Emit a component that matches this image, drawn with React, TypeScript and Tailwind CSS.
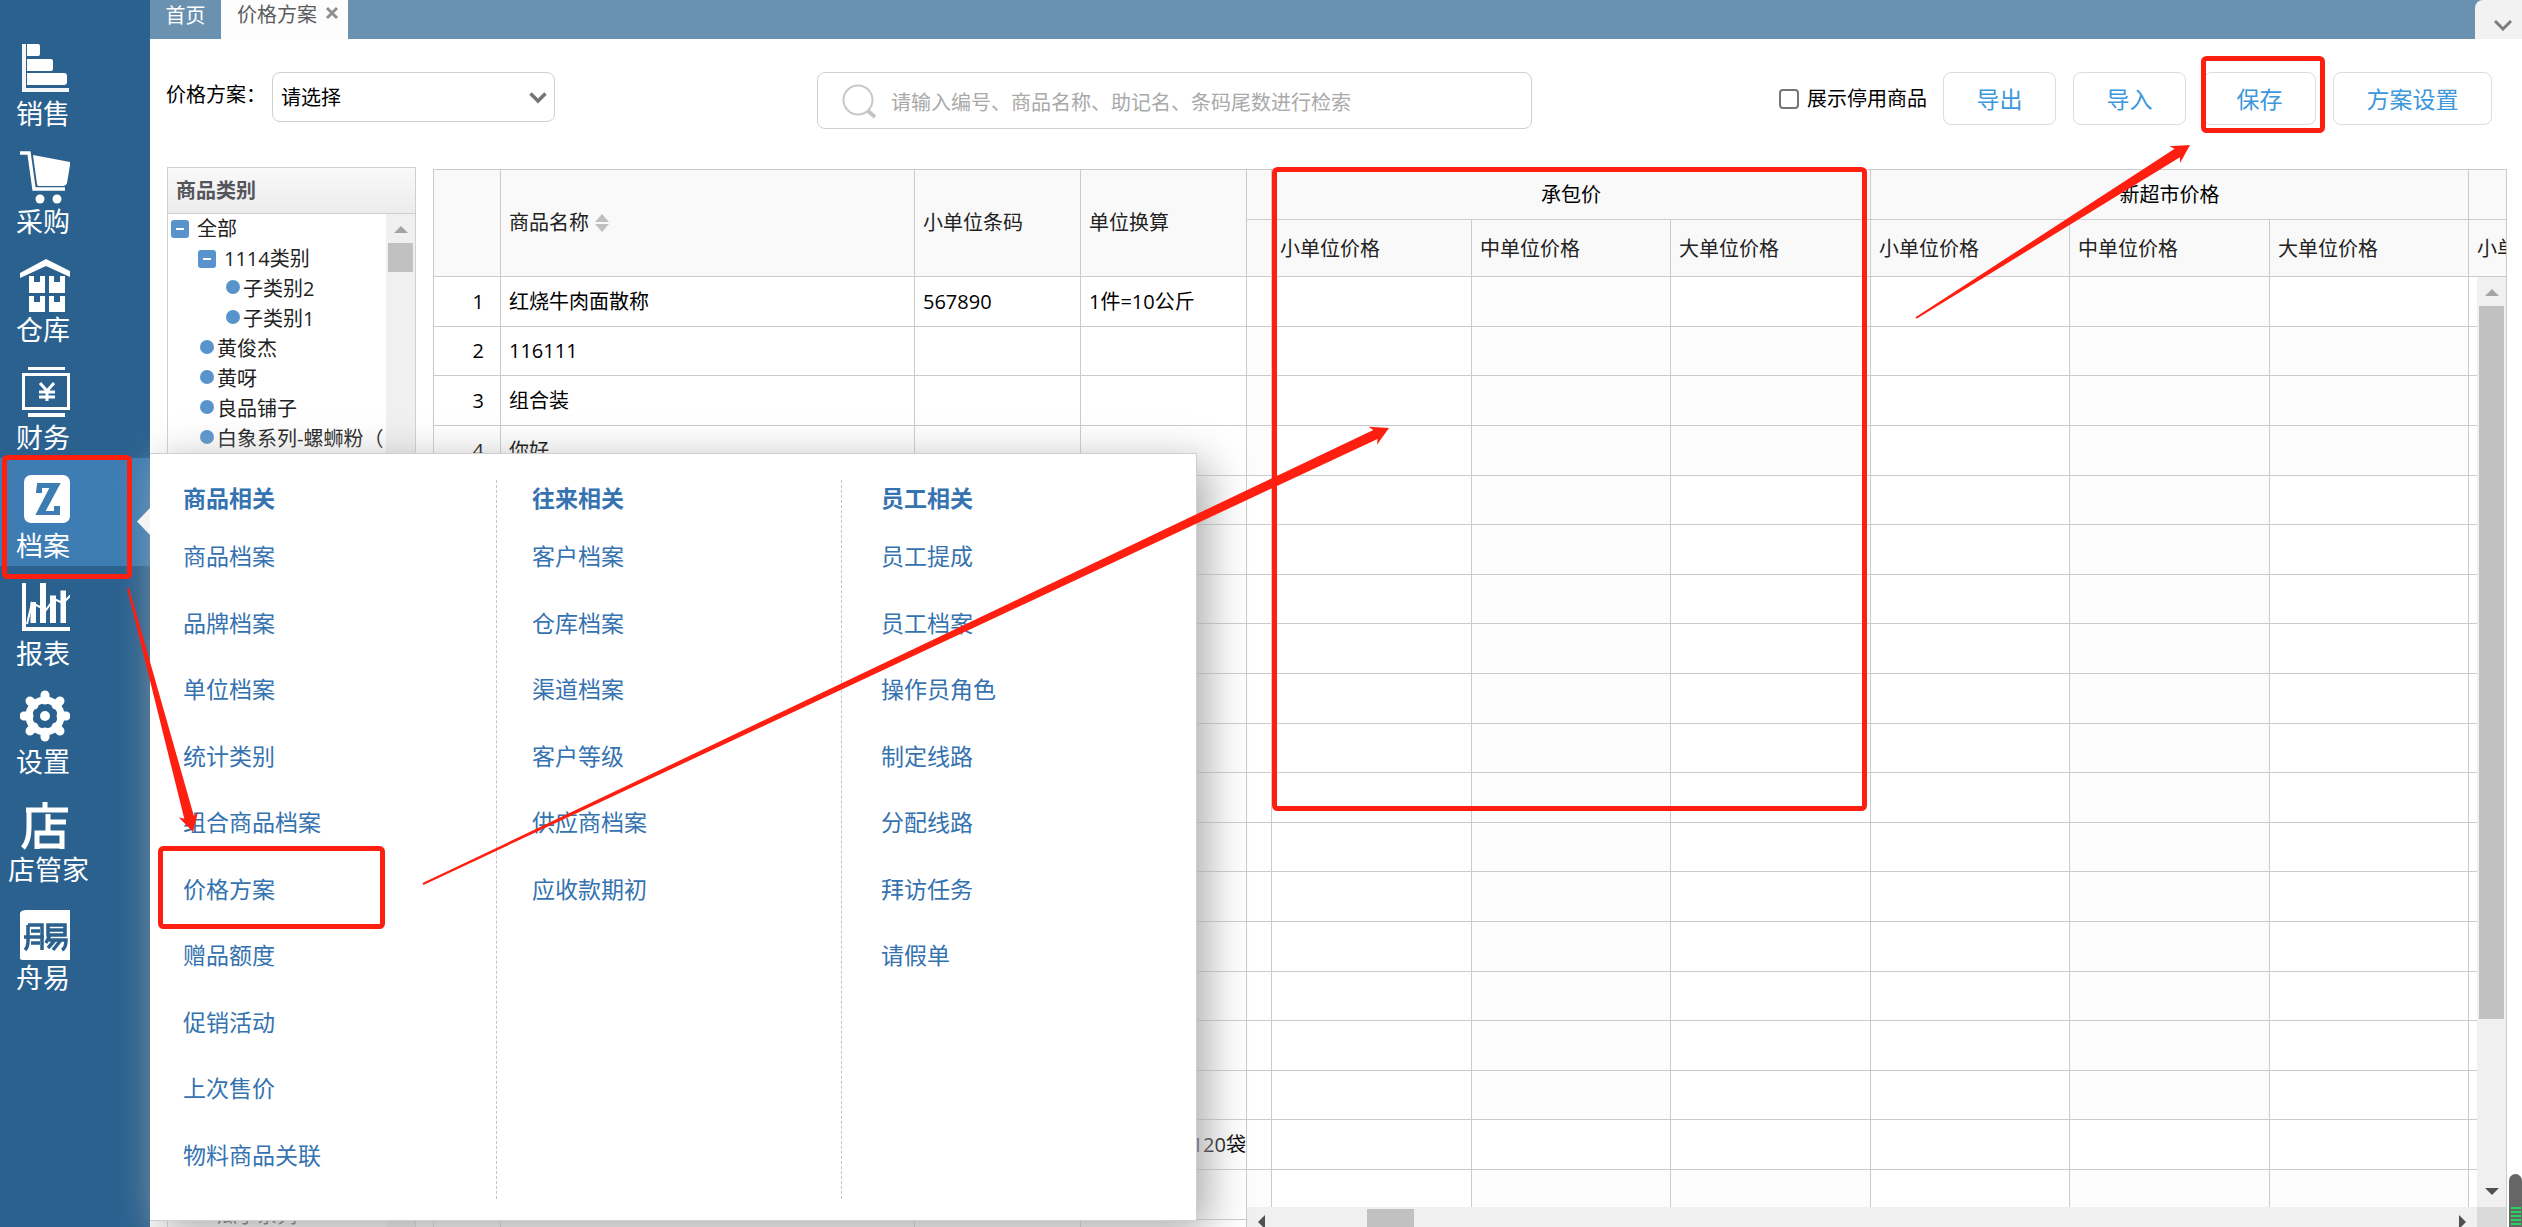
import type { ReactNode } from "react";

const RED = "#ff1f10";

type NavItem = { label: string; icon: ReactNode; active?: boolean; wide?: boolean };

const nav: NavItem[] = [
  {
    label: "销售",
    icon: (
      <>
        <path d="M2 2h4v44h43v4H2z" opacity=".95" />
        <path d="M7 2h11q2 0 2 2v8q0 2-2 2H7zM7 17h24q2 0 2 2v8q0 2-2 2H7zM7 31h37q3 0 3 3v6q0 3-3 3H7z" />
      </>
    ),
  },
  {
    label: "采购",
    icon: (
      <>
        <path d="M13 5l37 7v3l-3 18q-1 3-4 3H19q-2 0-2-2z" />
        <path d="M-1 3h10l5 36h31" fill="none" stroke="#fff" strokeWidth="3.500" />
        <circle cx="20" cy="49" r="4.500" />
        <circle cx="37" cy="49" r="4.500" />
      </>
    ),
  },
  {
    label: "仓库",
    icon: (
      <>
        <path d="M0 20V15L26 1l24 12v6L26 8z" />
        <path d="M9 18h5v6h6v-6h5v17H9zM29 18h5v6h6v-6h5v17H29zM9 38h5v6h6v-6h5v16H9zM29 38h5v6h6v-6h5v16H29z" />
      </>
    ),
  },
  {
    label: "财务",
    icon: (
      <>
        <path d="M8 1h37v3H8zM8 47h37v4H8z" />
        <path d="M3.500 8.500h45v34h-45z" fill="none" stroke="#fff" strokeWidth="3" />
        <path d="M20 17l7 8 7-8M27 25v10M19 26h16M19 31h16" fill="none" stroke="#fff" strokeWidth="3" />
      </>
    ),
  },
  {
    label: "档案",
    active: true,
    icon: (
      <>
        <rect x="4" y="1" width="46" height="48" rx="7" />
        <path d="M18 10h21L24 38h11v-5h4v7H17L31 13H21v5h-4z" fill="#3d7db3" stroke="#3d7db3" strokeWidth="2" />
      </>
    ),
  },
  {
    label: "报表",
    icon: (
      <>
        <path d="M2 1h4v44h44v4H2z" />
        <path d="M10.500 20h5.500v21h-5.500zM20 1h6v40h-6zM30 13.500h6V41h-6zM40.500 8.500H46V41h-5.500z" />
        <path d="M7 42l5-21 14 7 8-11 9 4 8-8" fill="none" stroke="#fff" strokeWidth="2" />
      </>
    ),
  },
  {
    label: "设置",
    icon: (
      <>
        <circle cx="25" cy="26" r="16" fill="none" stroke="#fff" strokeWidth="7" />
        <circle cx="25" cy="26" r="5" />
        <path
          d="M25 5v5M25 42v5M4 26h5M41 26h5M10 11l4 4M36 37l4 4M40 11l-4 4M14 37l-4 4"
          stroke="#fff"
          strokeWidth="9"
          strokeLinecap="round"
        />
      </>
    ),
  },
  {
    label: "店管家",
    wide: true,
    icon: (
      <path
        d="M25 4v7M6 12h42M9 12v18q0 13-6 20M28 16v18M28 24h18M17 35h25v13H17zM17 35v16M42 35v16"
        fill="none"
        stroke="#fff"
        strokeWidth="5"
      />
    ),
  },
  {
    label: "舟易",
    icon: (
      <>
        <path d="M50 4v50H3q-4 0-4-4V11q0-7 7-7z" />
        <path
          d="M8 19h14v25M8 19v16q0 6-3 9M11 25h9M4 31h20M11 37h9M28 19h17v10H28zM28 24h17M30 29l-4 8M29 34h17q0 8-4 10M35 34l-7 8M41 34l-8 10"
          fill="none"
          stroke="#2a618f"
          strokeWidth="3.500"
        />
      </>
    ),
  },
];

const menu = [
  {
    title: "商品相关",
    column: "w-[347px] pl-[33px]",
    items: [
      "商品档案", "品牌档案", "单位档案", "统计类别", "组合商品档案",
      "价格方案", "赠品额度", "促销活动", "上次售价", "物料商品关联",
    ],
  },
  {
    title: "往来相关",
    column: "w-[345px] pl-[35px]",
    items: ["客户档案", "仓库档案", "渠道档案", "客户等级", "供应商档案", "应收款期初"],
  },
  {
    title: "员工相关",
    column: "flex-1 pl-[39px]",
    items: ["员工提成", "员工档案", "操作员角色", "制定线路", "分配线路", "拜访任务", "请假单"],
  },
];

type Product = { name?: string; code?: string; unit?: string; mid?: boolean; big?: boolean };

const products: Product[] = Array.from({ length: 20 }, (): Product => ({ big: true }));
products[0] = { name: "红烧牛肉面散称", code: "567890", unit: "1件=10公斤", big: true };
products[1] = { name: "116111" };
products[2] = { name: "组合装" };
products[3] = { name: "你好" };
products[17] = { unit: "120袋", mid: true, big: true };
products[18] = {};

const rowHeight = (i: number) => (i % 5 === 1 || i % 5 === 4 ? "h-[49px]" : "h-[50px]");

function MenuPanel() {
  return (
    <div className="absolute left-full top-[453px] z-20 flex h-[768px] w-[1047px] border border-l-0 border-[#cfcfcf] bg-white pb-[21px] pt-[26px] shadow-[10px_10px_40px_#aaa]">
      {menu.map((group) => (
        <section
          key={group.title}
          className={`flex flex-col border-r border-dashed border-[#c4c4c4] text-[23px] text-[#3572b0] last:border-r-0 ${group.column}`}
        >
          <h2 className="mb-[7px] flex h-9 items-center font-bold">{group.title}</h2>
          <ul className="grid h-[665px] grid-rows-10">
            {group.items.map((item) => (
              <li key={item} className="flex items-center">
                <a href="#">{item}</a>
              </li>
            ))}
          </ul>
        </section>
      ))}
    </div>
  );
}

function Sidebar() {
  return (
    <aside className="relative z-10 w-[150px] shrink-0 bg-[#2a618f] pt-[26px]">
      <nav>
        {nav.map((item) => (
          <a
            key={item.label}
            href="#"
            className={`relative flex h-[108px] flex-col pt-4 text-[27px] leading-9 text-white ${
              item.active ? "bg-[#3d7db3]" : ""
            } ${item.wide ? "pl-2" : "pl-4"}`}
          >
            <svg
              viewBox="0 0 50 54"
              fill="#fff"
              className={`h-[54px] w-[50px] shrink-0 ${item.wide ? "ml-3" : "ml-1"}`}
              aria-hidden="true"
            >
              {item.icon}
            </svg>
            {item.label}
          </a>
        ))}
      </nav>
      <MenuPanel />
      <svg
        viewBox="0 0 13 27"
        className="absolute right-0 top-[508px] z-30 h-[27px] w-[13px]"
        aria-hidden="true"
      >
        <path d="M13 0L0 13.500 13 27z" fill="#f4f4f4" />
      </svg>
    </aside>
  );
}

function TabBar() {
  return (
    <div className="flex h-[39px] shrink-0 bg-[#6b91b0] leading-[30px]">
      <button className="w-[71px] pb-2 text-white">首页</button>
      <div className="flex w-[127px] gap-2 bg-[#fdfdfd] pl-4 text-[#5c5c5c]">
        <span>价格方案</span>
        <button aria-label="关闭" className="h-[26px]">
          <svg viewBox="0 0 14 14" className="size-[14px]" aria-hidden="true">
            <path d="M2 2l10 10M12 2L2 12" stroke="#909090" strokeWidth="3" />
          </svg>
        </button>
      </div>
      <button
        aria-label="更多标签"
        className="ml-auto flex w-[47px] justify-center rounded-tl-lg bg-[#f2f2f2] pl-2 pt-[20px]"
      >
        <svg viewBox="0 0 18 11" className="h-[11px] w-[18px]" aria-hidden="true">
          <path d="M1 1l8 8 8-8" fill="none" stroke="#7d7d7d" strokeWidth="3" />
        </svg>
      </button>
    </div>
  );
}

function Toolbar() {
  const button = "h-[53px] rounded-lg border border-[#dcdcdc] bg-white text-[23px] text-[#3c97dd]";
  return (
    <div className="flex h-[128px] shrink-0 items-start pl-4 pr-[30px] pt-[33px]">
      <label htmlFor="plan" className="w-[106px] leading-[46px]">
        价格方案：
      </label>
      <div className="relative w-[283px]">
        <select
          id="plan"
          className="h-[50px] w-full appearance-none rounded-lg border border-[#d0d0d0] bg-white pl-2 pt-[2px] text-black"
        >
          <option>请选择</option>
        </select>
        <svg viewBox="0 0 18 12" className="pointer-events-none absolute right-2 top-[20px] h-3 w-[18px]" aria-hidden="true">
          <path d="M1.500 1.500L9 9l7.500-7.500" fill="none" stroke="#757575" strokeWidth="3.500" />
        </svg>
      </div>
      <div className="relative ml-[262px] w-[715px]">
        <svg viewBox="0 0 36 36" className="absolute left-[25px] top-[12px] size-9" aria-hidden="true">
          <circle cx="16" cy="16" r="14.500" fill="none" stroke="#c8c8c8" strokeWidth="2" />
          <path d="M26 27l7 6" stroke="#c4c4c4" strokeWidth="4" />
        </svg>
        <input
          aria-label="检索商品"
          placeholder="请输入编号、商品名称、助记名、条码尾数进行检索"
          className="h-[57px] w-full rounded-lg border border-[#d0d0d0] pl-[73px] pt-1 placeholder:text-[#a9a9a9]"
        />
      </div>
      <label className="ml-auto mr-4 flex h-[53px] items-center gap-2">
        <input
          type="checkbox"
          className="size-5 appearance-none rounded-[4px] border-2 border-[#767676] bg-white"
        />
        展示停用商品
      </label>
      <div className="flex gap-[17px]">
        <button className={`${button} w-[113px]`}>导出</button>
        <button className={`${button} w-[113px]`}>导入</button>
        <button className={`${button} w-[113px]`}>保存</button>
        <button className={`${button} w-[159px]`}>方案设置</button>
      </div>
    </div>
  );
}

function Toggle() {
  return (
    <button aria-label="折叠" className="mr-2 flex size-[18px] items-center justify-center rounded-[3px] bg-[#5894cb]">
      <span className="h-[2px] w-2 bg-white" />
    </button>
  );
}

function Leaf({ name }: { name: string }) {
  return (
    <li className="flex h-[30px] items-center gap-[3px] whitespace-nowrap">
      <span className="mb-1 size-[14px] shrink-0 rounded-full bg-[#5894cb]" />
      {name}
    </li>
  );
}

function CategoryTree() {
  return (
    <section className="flex w-[249px] shrink-0 flex-col border border-b-0 border-[#cfcfcf]">
      <h2 className="flex h-[46px] shrink-0 items-center border-b border-[#cfcfcf] bg-gradient-to-b from-[#f9f9f9] to-[#ececec] pl-2 font-bold text-[#55555c]">
        商品类别
      </h2>
      <div className="flex min-h-0 flex-1 text-[#222]">
        <div className="-mb-1 flex flex-1 flex-col justify-between overflow-hidden">
          <ul>
            <li className="flex h-[30px] items-center pl-[3px]"><Toggle />全部</li>
            <li className="flex h-[30px] items-center pl-[30px]"><Toggle />1114类别</li>
            <li>
              <ul className="pl-[58px]">
                <Leaf name="子类别2" />
                <Leaf name="子类别1" />
              </ul>
            </li>
            <li>
              <ul className="pl-8">
                <Leaf name="黄俊杰" />
                <Leaf name="黄呀" />
                <Leaf name="良品铺子" />
                <Leaf name="白象系列-螺蛳粉（" />
              </ul>
            </li>
          </ul>
          <ul className="pl-8">
            <Leaf name="瓜子系列" />
          </ul>
        </div>
        <div className="flex w-[29px] shrink-0 flex-col items-center bg-[#f0f0f0] pt-[12px]">
          <svg viewBox="0 0 14 7" className="h-[7px] w-[14px]" aria-hidden="true">
            <path d="M0 7l7-7 7 7z" fill="#a3a3a3" />
          </svg>
          <div className="mt-[10px] h-[29px] w-[25px] bg-[#c1c1c1]" />
        </div>
      </div>
    </section>
  );
}

const th = "border-b border-r border-[#cbcbcb] bg-[#f9f9f9] font-normal text-[#222]";
const td = "border-b border-r border-[#cbcbcb]";

function ProductTable() {
  return (
    <table className="w-[813px] shrink-0 table-fixed border-separate border-spacing-0 self-start text-left">
      <colgroup>
        <col className="w-[67px]" />
        <col className="w-[414px]" />
        <col className="w-[166px]" />
        <col className="w-[166px]" />
      </colgroup>
      <thead>
        <tr className="h-[107px]">
          <th className={th} aria-label="序号" />
          <th className={`${th} pl-2`}>
            <span className="flex items-center gap-[6px]">
              商品名称
              <svg viewBox="0 0 14 18" className="h-[18px] w-[14px]" aria-hidden="true">
                <path d="M0 8l7-8 7 8zM0 10h14l-7 8z" fill="#c0c0c0" />
              </svg>
            </span>
          </th>
          <th className={`${th} pl-2`}>小单位条码</th>
          <th className={`${th} pl-2`}>单位换算</th>
        </tr>
      </thead>
      <tbody>
        {products.map((p, i) => (
          <tr key={i} className={rowHeight(i)}>
            <td className={`${td} pr-4 text-right`}>{i < 4 ? i + 1 : ""}</td>
            <td className={`${td} pl-2`}>{p.name}</td>
            <td className={`${td} pl-2`}>{p.code}</td>
            <td className={`${td} whitespace-nowrap ${i === 17 ? "text-right" : "pl-2"}`}>{p.unit}</td>
          </tr>
        ))}
      </tbody>
    </table>
  );
}

const groups = ["承包价", "新超市价格", ""];

function PriceTable() {
  return (
    <table className="w-[1422px] table-fixed border-separate border-spacing-0 text-left">
      <colgroup>
        <col className="w-[25px]" />
        <col className="w-[200px]" />
        <col className="w-[199px]" />
        <col className="w-[200px]" />
        <col className="w-[199px]" />
        <col className="w-[200px]" />
        <col className="w-[199px]" />
        <col className="w-[200px]" />
      </colgroup>
      <thead>
        <tr className="h-[50px]">
          <th className={th} aria-label="其他" />
          {groups.map((g, i) => (
            <th key={i} colSpan={g ? 3 : 1} className={`${th} text-center text-black`}>
              {g}
            </th>
          ))}
        </tr>
        <tr className="h-[57px]">
          <th className={th} aria-label="其他" />
          {["小", "中", "大", "小", "中", "大", "小"].map((size, i) => (
            <th key={i} className={`${th} whitespace-nowrap pl-2 pt-[2px]`}>{`${size}单位价格`}</th>
          ))}
        </tr>
      </thead>
      <tbody>
        {products.map((p, i) => {
          const mid = p.mid ? "bg-white" : "bg-[#fcfcfc]";
          const big = p.big ? "bg-white" : "bg-[#fcfcfc]";
          return (
            <tr key={i} className={rowHeight(i)}>
              <td className={`${td} ${big}`} />
              <td className={td} />
              <td className={`${td} ${mid}`} />
              <td className={`${td} ${big}`} />
              <td className={td} />
              <td className={`${td} ${mid}`} />
              <td className={`${td} ${big}`} />
              <td className={td} />
            </tr>
          );
        })}
      </tbody>
    </table>
  );
}

function DataGrid() {
  return (
    <div className="mt-[2px] flex min-w-0 flex-1 overflow-hidden border-l border-r border-t border-[#cbcbcb] text-black">
      <ProductTable />
      <div className="relative min-w-0 flex-1 overflow-hidden">
        <PriceTable />
        <div className="absolute bottom-5 right-0 top-[107px] flex w-[29px] flex-col items-center bg-[#f0f0f0] pb-3 pt-[12px]">
          <svg viewBox="0 0 14 7" className="h-[7px] w-[14px] shrink-0" aria-hidden="true">
            <path d="M0 7l7-7 7 7z" fill="#a3a3a3" />
          </svg>
          <div className="mb-[169px] mt-[10px] w-[25px] flex-1 bg-[#c1c1c1]" />
          <svg viewBox="0 0 14 7" className="h-[7px] w-[14px] shrink-0" aria-hidden="true">
            <path d="M0 0h14L7 7z" fill="#505050" />
          </svg>
        </div>
        <div className="absolute inset-x-0 bottom-0 flex h-5 items-end bg-[#f0f0f0]">
          <svg viewBox="0 0 7 12" className="ml-[11px] h-3 w-[7px]" aria-hidden="true">
            <path d="M7 0v14L0 7z" fill="#505050" />
          </svg>
          <div className="ml-[102px] h-[18px] w-[47px] bg-[#c1c1c1]" />
          <svg viewBox="0 0 7 12" className="ml-auto mr-[11px] h-3 w-[7px]" aria-hidden="true">
            <path d="M0 0v14l7-7z" fill="#505050" />
          </svg>
          <div className="h-5 w-[29px] bg-[#dadada]" />
        </div>
      </div>
    </div>
  );
}

function arrowPoints(x1: number, y1: number, x2: number, y2: number) {
  const len = Math.hypot(x2 - x1, y2 - y1);
  const ux = (x2 - x1) / len;
  const uy = (y2 - y1) / len;
  const at = (back: number, side: number) => `${x2 - ux * back - uy * side},${y2 - uy * back + ux * side}`;
  return [at(len, -1), at(15, -5), at(18, -10), at(0, 0), at(18, 10), at(15, 5), at(len, 1)].join(" ");
}

function Annotations() {
  return (
    <svg
      viewBox="0 0 2522 1227"
      className="pointer-events-none absolute left-0 top-0 z-40 h-[1227px] w-[2522px]"
      fill="none"
      stroke={RED}
      strokeWidth="5"
      aria-hidden="true"
    >
      <rect x="4.500" y="457.500" width="125" height="119" rx="3" />
      <rect x="160.500" y="848.500" width="222" height="78" rx="3" />
      <rect x="1274.500" y="169.500" width="590" height="639" rx="3" />
      <rect x="2203.500" y="58.500" width="119" height="72" rx="3" />
      <g fill={RED} stroke="none">
        <polygon points={arrowPoints(128, 588, 193, 832)} />
        <polygon points={arrowPoints(423, 884, 1389, 428)} />
        <polygon points={arrowPoints(1916, 318, 2190, 145)} />
      </g>
    </svg>
  );
}

function VolumeMeter() {
  return (
    <div className="absolute bottom-0 right-0 z-30 flex h-[53px] w-[13px] flex-col items-center justify-end gap-[2px] rounded-t-lg bg-[#666] pb-[2px]">
      {[0, 1, 2, 3, 4].map((n) => (
        <span key={n} className="h-[2px] w-[10px] bg-[#1fd65f]" />
      ))}
    </div>
  );
}

export default function App() {
  return (
    <div className="relative flex h-screen overflow-hidden bg-white font-['Open_Sans','Noto_Sans_CJK_SC',sans-serif] text-[20px] leading-[30px] text-black">
      <Sidebar />
      <main className="flex min-w-0 flex-1 flex-col">
        <TabBar />
        <Toolbar />
        <div className="flex min-h-0 flex-1 gap-[17px] pl-[17px] pr-[15px]">
          <CategoryTree />
          <DataGrid />
        </div>
      </main>
      <VolumeMeter />
      <Annotations />
    </div>
  );
}
